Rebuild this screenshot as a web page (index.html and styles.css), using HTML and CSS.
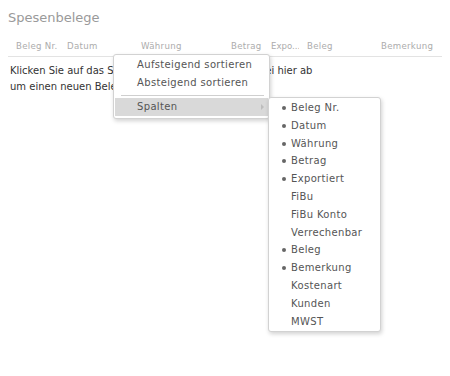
FILE: index.html
```html
<!DOCTYPE html>
<html>
<head>
  <title>Spesenbelege</title>
  <link rel="stylesheet" href="styles.css">
</head>
<body>
  <div class="page">
    <h1 class="title">Spesenbelege</h1>

    <div class="grid-head">
      <div class="col c1">Beleg Nr.</div>
      <div class="col c2">Datum</div>
      <div class="col c3">Währung</div>
      <div class="col c4">Betrag</div>
      <div class="col c5">Expo...</div>
      <div class="col c6">Beleg</div>
      <div class="col c7">Bemerkung</div>
    </div>

    <p class="hint">Klicken Sie auf das Symbol oder legen Sie eine Datei hier ab<br>um einen neuen Beleg zu erfassen</p>
  </div>

  <!-- context menu -->
  <div class="menu main-menu">
    <div class="item">Aufsteigend sortieren</div>
    <div class="item">Absteigend sortieren</div>
    <div class="sep"></div>
    <div class="item active">Spalten <span class="arrow"></span></div>
  </div>

  <div class="menu sub-menu">
    <div class="item on">Beleg Nr.</div>
    <div class="item on">Datum</div>
    <div class="item on">Währung</div>
    <div class="item on">Betrag</div>
    <div class="item on">Exportiert</div>
    <div class="item">FiBu</div>
    <div class="item">FiBu Konto</div>
    <div class="item">Verrechenbar</div>
    <div class="item on">Beleg</div>
    <div class="item on">Bemerkung</div>
    <div class="item">Kostenart</div>
    <div class="item">Kunden</div>
    <div class="item">MWST</div>
  </div>
</body>
</html>
```

FILE: styles.css
```css
body {
  margin: 0;
  background: #fff;
  font-family: "DejaVu Sans", "Noto Sans", sans-serif;
  color: #333;
}

.page {
  padding: 0 8px;
}

.title {
  margin: 0;
  padding-top: 10px;
  font-size: 13px;
  font-weight: normal;
  color: #9a9a9a;
  height: 28px;
}

.grid-head {
  display: grid;
  grid-template-columns: 51px 74px 90px 40px 36px 74px 1fr;
  height: 18px;
  border-bottom: 1px solid #e3e3e3;
  font-size: 8.6px;
  letter-spacing: 0.3px;
  color: #acacac;
  line-height: 16px;
}

.col {
  padding-left: 8px;
  white-space: nowrap;
  overflow: hidden;
}

.c5 {
  letter-spacing: 0;
}

.hint {
  margin: 0;
  padding: 6px 2px;
  font-size: 10px;
  line-height: 16px;
  color: #333;
  white-space: nowrap;
}

.menu {
  position: absolute;
  background: #fff;
  border: 1px solid #d2d2d2;
  border-radius: 3px;
  box-shadow: 1px 2px 4px rgba(0, 0, 0, 0.18);
  font-size: 10px;
  letter-spacing: 0.35px;
  color: #555;
}

.main-menu {
  left: 113px;
  top: 54px;
  width: 153px;
  padding: 1px 1px 2px;
}

.main-menu .item {
  height: 18px;
  line-height: 18px;
  padding-left: 22px;
  position: relative;
}

.main-menu .item.active {
  background: #d9d9d9;
}

.arrow {
  position: absolute;
  right: 4px;
  top: 6px;
  border-left: 3px solid #bdbdbd;
  border-top: 3px solid transparent;
  border-bottom: 3px solid transparent;
}

.sep {
  height: 1px;
  margin: 3px 4px 2px 6px;
  background: #cfcfcf;
}

.sub-menu {
  left: 268px;
  top: 97px;
  width: 111px;
  padding: 1px 0;
}

.sub-menu .item {
  height: 17.8px;
  line-height: 17.8px;
  padding-left: 22px;
  position: relative;
}

.sub-menu .item.on::before {
  content: "";
  position: absolute;
  left: 13px;
  top: 7px;
  width: 4px;
  height: 4px;
  border-radius: 50%;
  background: #666;
}
```
